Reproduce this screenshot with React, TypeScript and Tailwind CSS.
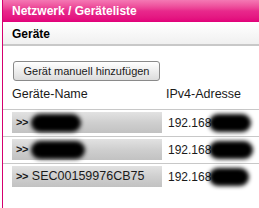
import React from "react";

const font = { fontFamily: '"Liberation Sans", Arial, sans-serif' };

function Blob({ w, h }: { w: number; h: number }) {
  return (
    <span
      className="inline-block rounded-full bg-black blur-[2px]"
      style={{ width: w, height: h }}
    />
  );
}

function Row({ name, nameBlob, ipBlob }: { name?: string; nameBlob?: number; ipBlob: number }) {
  return (
    <div className="flex border-t border-[#c8c8c8] pt-[2px] pb-[3px] pl-[9px]">
      <div className="flex h-[21px] w-[150px] items-center bg-gradient-to-b from-[#e2e2e2] via-[#cfcfcf] to-[#c2c2c2] pl-[4px] text-[12.5px] text-[#1a1a1a]">
        <span className="font-bold text-[11px] tracking-[-0.5px]">&gt;&gt;</span>
        {name ? (
          <span className="ml-[4px]">{name}</span>
        ) : (
          <span className="ml-[3px] flex items-center">
            <Blob w={nameBlob ?? 50} h={18} />
          </span>
        )}
      </div>
      <div className="ml-[6px] flex h-[21px] items-center text-[12px] text-[#1a1a1a]">
        <span>192.168</span>
        <span className="-ml-[2px] flex items-center">
          <Blob w={ipBlob} h={18} />
        </span>
      </div>
    </div>
  );
}

export default function App() {
  return (
    <div className="h-[208px] w-[259px] overflow-hidden bg-white pl-[2px]" style={font}>
      <div className="flex h-full flex-col border-l border-[#d5006f]">
        <div className="flex h-[22px] items-center bg-gradient-to-b from-[#f478b4] via-[#e8288c] to-[#e2007a] pl-[9px] text-[12px] font-bold text-white">
          Netzwerk / Geräteliste
        </div>
        <div className="mt-[1px] flex h-[23px] items-center border-b-2 border-[#c8c8c8] bg-gradient-to-b from-white to-[#f0f0f0] pl-[9px] text-[12px] font-bold text-black">
          Geräte
        </div>
        <div className="pl-[10px] pt-[15px]">
          <button className="flex h-[20px] w-[147px] items-center justify-center rounded-[3px] border border-[#8a8a8a] bg-gradient-to-b from-white to-[#dcdcdc] text-[11px] text-[#1a1a1a]">
            Gerät manuell hinzufügen
          </button>
        </div>
        <div className="flex h-[28px] items-end pb-[5px] pl-[9px] text-[12.5px] text-[#1a1a1a]">
          <span className="w-[154px]">Geräte-Name</span>
          <span>IPv4-Adresse</span>
        </div>
        <Row nameBlob={50} ipBlob={42} />
        <Row nameBlob={54} ipBlob={44} />
        <Row name="SEC00159976CB75" ipBlob={40} />
      </div>
    </div>
  );
}
